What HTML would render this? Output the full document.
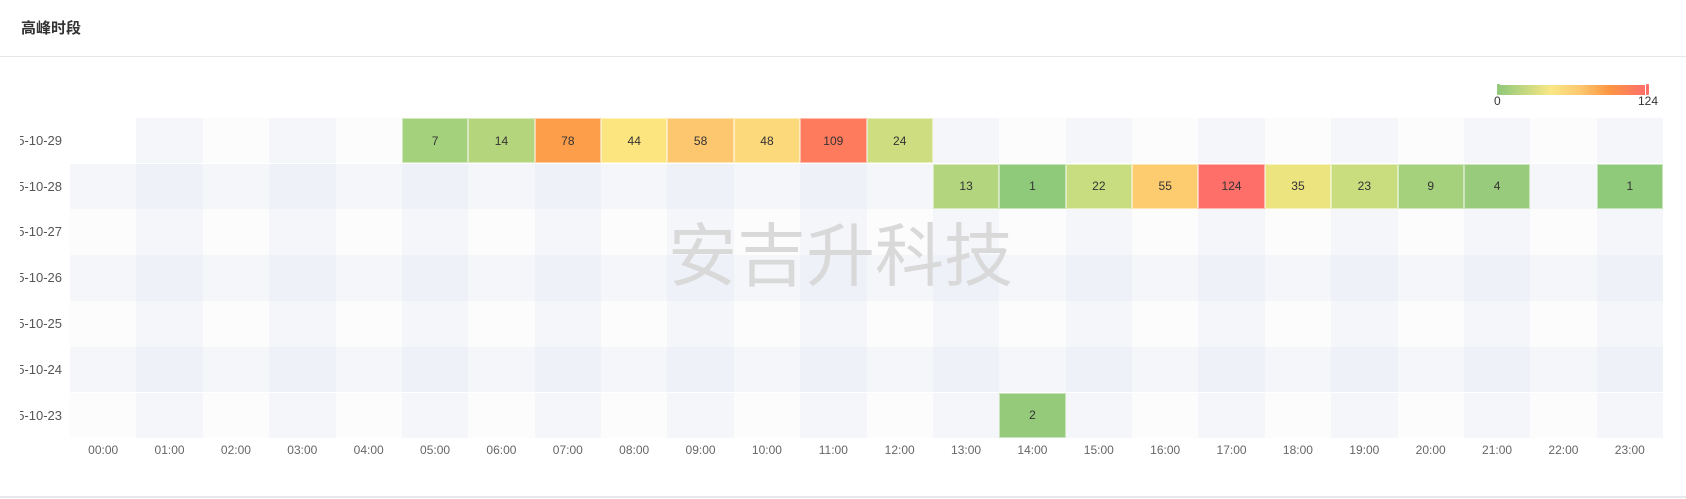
<!DOCTYPE html>
<html><head><meta charset="utf-8"><style>
body{margin:0;width:1686px;height:499px;background:#fff;position:relative;overflow:hidden;font-family:"Liberation Sans","Noto Sans CJK SC",sans-serif;}
.t{position:absolute;left:21px;top:17px;font-size:15px;font-weight:bold;color:#333;}
.hl{position:absolute;left:0;right:0;top:56px;height:1px;background:#e6e6ea;}
.bl{position:absolute;left:0;right:0;top:496px;height:2px;background:#e8e8ec;}
.c{position:absolute;width:66.4px;height:45.8px;box-sizing:border-box;font-size:12px;color:#333;display:flex;align-items:center;justify-content:center;}
.d{border:1px solid rgba(255,255,255,.5);}
.yclip{position:absolute;left:20px;top:0;width:44px;height:499px;overflow:hidden;}
.yl{position:absolute;right:2px;font-size:13px;color:#555;height:45.8px;line-height:45.8px;white-space:nowrap;}
.xl{position:absolute;top:443px;width:66.4px;text-align:center;font-size:12px;color:#666;}
.wm{position:absolute;left:668px;top:200px;font-size:69px;color:#d9d9d9;font-family:"Noto Sans CJK SC",sans-serif;}
</style></head><body>
<div class="t">高峰时段</div><div class="hl"></div><div class="bl"></div>
<div id="g"></div>
<div class="yclip" id="y"></div>
<div style="position:absolute;left:1497px;top:84px;width:3px;height:11px;background:#93c97a;border-radius:1px"></div>
<div style="position:absolute;left:1500px;top:85px;width:145px;height:10px;background:linear-gradient(90deg,#93c97a,#f9e784 35%,#fdc86f 55%,#fd9642 75%,#ff6f6a)"></div>
<div style="position:absolute;left:1646px;top:84px;width:3px;height:11px;background:#ff6f6a;border-radius:1px"></div>
<div style="position:absolute;left:1494px;top:94px;font-size:12px;color:#333">0</div>
<div style="position:absolute;left:1638px;top:94px;font-size:12px;color:#333">124</div>
<div class="wm">安吉升科技</div>
<script>
var g=document.getElementById('g'),h='',yh='';
var x0=70,w=66.375,y0=117.7,rh=45.8;
var rows=['2025-10-29','2025-10-28','2025-10-27','2025-10-26','2025-10-25','2025-10-24','2025-10-23'];
var data={'0,5':[7,'#a3d17c'],'0,6':[14,'#b4d57c'],'0,7':[78,'#fd9f4a'],'0,8':[44,'#fce47e'],'0,9':[58,'#fdc76f'],'0,10':[48,'#fcd97a'],'0,11':[109,'#ff7b5e'],'0,12':[24,'#cddd80'],
'1,13':[13,'#b2d57d'],'1,14':[1,'#8fc97a'],'1,15':[22,'#c8dd7f'],'1,16':[55,'#fdcc6f'],'1,17':[124,'#ff6f6a'],'1,18':[35,'#ebe47f'],'1,19':[23,'#c9dc7e'],'1,20':[9,'#a5d17c'],'1,21':[4,'#98cb7b'],'1,23':[1,'#8fc97a'],'6,14':[2,'#94ca7a']};
var lv=['#fcfcfc','#f5f6fa','#eef1f8'];
for(var r=0;r<7;r++){
 yh+='<div class="yl" style="top:'+(y0+r*rh)+'px">'+rows[r]+'</div>';
 for(var c=0;c<24;c++){
  var k=r+','+c,bg=lv[(r%2)+(c%2)];
  if(r==0&&c==0)bg='#fff';
  var s='left:'+(x0+c*w)+'px;top:'+(y0+r*rh)+'px;';
  if(data[k])h+='<div class="c d" style="'+s+'background:'+data[k][1]+'">'+data[k][0]+'</div>';
  else h+='<div class="c" style="'+s+'background:'+bg+'"></div>';
 }
}
for(var c=0;c<24;c++)h+='<div class="xl" style="left:'+(x0+c*w)+'px">'+(c<10?'0':'')+c+':00</div>';
g.innerHTML=h;document.getElementById('y').innerHTML=yh;
</script>
</body></html>
